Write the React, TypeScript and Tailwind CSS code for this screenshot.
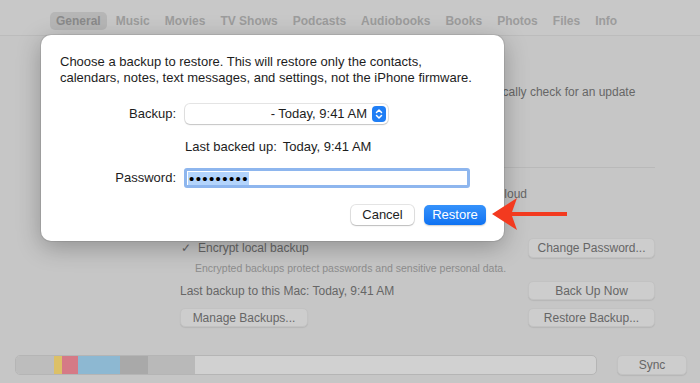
import React from "react";

const tabs = ["General", "Music", "Movies", "TV Shows", "Podcasts", "Audiobooks", "Books", "Photos", "Files", "Info"];

function DimButton({ label, className = "" }: { label: string; className?: string }) {
  return (
    <div
      className={`flex h-full items-center justify-center rounded-[5px] border border-[#c2c2c2] bg-[#cdcdcd] text-[12px] text-[#666666] shadow-[0_1px_1px_rgba(0,0,0,0.08)] ${className}`}
    >
      {label}
    </div>
  );
}

function Stepper() {
  return (
    <svg width="14" height="16" viewBox="0 0 14 16" aria-hidden="true">
      <rect x="0" y="0" width="14" height="16" rx="4" fill="#1f7ef5" />
      <path d="M4.5 6.5L7 4L9.5 6.5" fill="none" stroke="#ffffff" strokeWidth="1.5" strokeLinecap="round" strokeLinejoin="round" />
      <path d="M4.5 9.5L7 12L9.5 9.5" fill="none" stroke="#ffffff" strokeWidth="1.5" strokeLinecap="round" strokeLinejoin="round" />
    </svg>
  );
}

function RestoreDialog() {
  return (
    <div className="absolute left-[41px] top-[35px] h-[206px] w-[463px] rounded-[10px] bg-white px-[19px] pt-[19px] shadow-[0_6px_24px_rgba(0,0,0,0.28),0_0_0_1px_rgba(0,0,0,0.08)]">
      <p className="text-[13px] leading-[16px] text-[#1d1d1d]">
        Choose a backup to restore. This will restore only the contacts,
        <br />
        calendars, notes, text messages, and settings, not the iPhone firmware.
      </p>

      <div className="mt-[18px] flex h-[20px] items-center">
        <span className="w-[116px] text-right text-[13px] text-[#1d1d1d]">Backup:</span>
        <div className="ml-[9px] flex h-[20px] w-[203px] items-center justify-end gap-[5px] rounded-[5px] bg-white pr-[2px] text-[13px] text-[#1d1d1d] shadow-[0_0_0_1px_rgba(0,0,0,0.1),0_1px_1.5px_rgba(0,0,0,0.15)]">
          <span>- Today, 9:41 AM</span>
          <Stepper />
        </div>
      </div>

      <div className="mt-[15px] flex h-[16px] items-center pl-[125px] text-[13px] text-[#1d1d1d]">
        <span>Last backed up:</span>
        <span className="ml-[6px]">Today, 9:41 AM</span>
      </div>

      <div className="mt-[13px] flex h-[20px] items-center">
        <span className="w-[116px] text-right text-[13px] text-[#1d1d1d]">Password:</span>
        <div className="ml-[8px] flex h-[20px] w-[286px] items-center rounded-[3px] border-[3px] border-[#8eb6ee] bg-white pl-[1px]">
          <span className="bg-[#b3d4fc] pl-[1px] text-[15px] leading-[13px] tracking-[1.4px] text-black">•••••••••</span>
        </div>
      </div>

      <div className="mt-[17px] flex h-[20px] justify-end gap-[10px]">
        <div className="flex w-[63px] items-center justify-center rounded-[5px] bg-white text-[13px] text-[#1d1d1d] shadow-[0_0_0_1px_rgba(0,0,0,0.1),0_1px_1.5px_rgba(0,0,0,0.18)]">
          Cancel
        </div>
        <div className="mr-[-1px] flex w-[62px] items-center justify-center rounded-[5px] bg-gradient-to-b from-[#3592fb] to-[#0d72f2] text-[13px] font-medium text-white shadow-[0_1px_1.5px_rgba(0,0,0,0.2)]">
          Restore
        </div>
      </div>
    </div>
  );
}

function Arrow() {
  return (
    <svg className="absolute left-[490px] top-[197px]" width="80" height="34" viewBox="0 0 80 34" aria-hidden="true">
      <path d="M2 17L27 1L22 15H77V19H22L27 33Z" fill="#f33a1f" />
    </svg>
  );
}

export default function App() {
  return (
    <div
      className="relative h-[383px] w-[700px] overflow-hidden bg-[#c6c6c6]"
      style={{ fontFamily: '"Liberation Sans", Arial, sans-serif' }}
    >
      <div className="flex h-[36px] items-center border-b border-[#bcbcbc] bg-[#c8c8c8] pl-[50px] pt-[7px]">
        <div className="flex items-center gap-[3px]">
          {tabs.map((t, i) => (
            <div
              key={t}
              className={`rounded-[5px] px-[6px] py-[2px] text-[12px] font-bold leading-[14px] ${
                i === 0 ? "bg-[#b6b6b6] text-[#8a8a8a]" : "text-[#9c9c9c]"
              }`}
            >
              {t}
            </div>
          ))}
        </div>
      </div>

      <div className="ml-[180px] w-[475px] text-[12px] text-[#666666]">
        <div className="mt-[48px] h-[16px] whitespace-nowrap pl-[203px] leading-[16px]">
          Your Mac will automatically check for an update
        </div>
        <div className="mt-[67px] h-px bg-[#b9b9b9]" />
        <div className="mt-[18px] h-[16px] w-[347px] whitespace-nowrap text-right leading-[16px]">
          Back up your most important data on your iPhone to iCloud
        </div>
        <div className="mt-[36px] flex h-[20px] items-center justify-between">
          <div className="flex items-center">
            <span className="w-[18px] pl-[1px]">✓</span>
            <span>Encrypt local backup</span>
          </div>
          <DimButton label="Change Password..." className="w-[127px]" />
        </div>
        <div className="mt-[3px] h-[14px] pl-[15px] text-[10.5px] leading-[14px] text-[#8d8d8d]">
          Encrypted backups protect passwords and sensitive personal data.
        </div>
        <div className="mt-[6px] flex h-[19px] items-center justify-between">
          <span>Last backup to this Mac: Today, 9:41 AM</span>
          <DimButton label="Back Up Now" className="w-[127px]" />
        </div>
        <div className="mt-[8px] flex h-[19px] items-center justify-between">
          <DimButton label="Manage Backups..." className="w-[128px]" />
          <DimButton label="Restore Backup..." className="w-[127px]" />
        </div>
      </div>

      <div className="ml-[15px] mt-[28px] flex h-[20px] w-[672px] items-center justify-between">
        <div className="flex h-[20px] w-[582px] overflow-hidden rounded-[5px] border border-[#b5b5b5] bg-[#d1d1d1]">
          <div className="w-[38px] bg-[#bdbdbd]" />
          <div className="w-[8px] bg-[#dcc067]" />
          <div className="w-[16px] bg-[#d57a86]" />
          <div className="w-[42px] bg-[#8db8d2]" />
          <div className="w-[28px] bg-[#a9a9a9]" />
          <div className="w-[47px] bg-[#b9b9b9]" />
        </div>
        <DimButton label="Sync" className="h-[19px] w-[70px]" />
      </div>

      <RestoreDialog />
      <Arrow />
    </div>
  );
}
